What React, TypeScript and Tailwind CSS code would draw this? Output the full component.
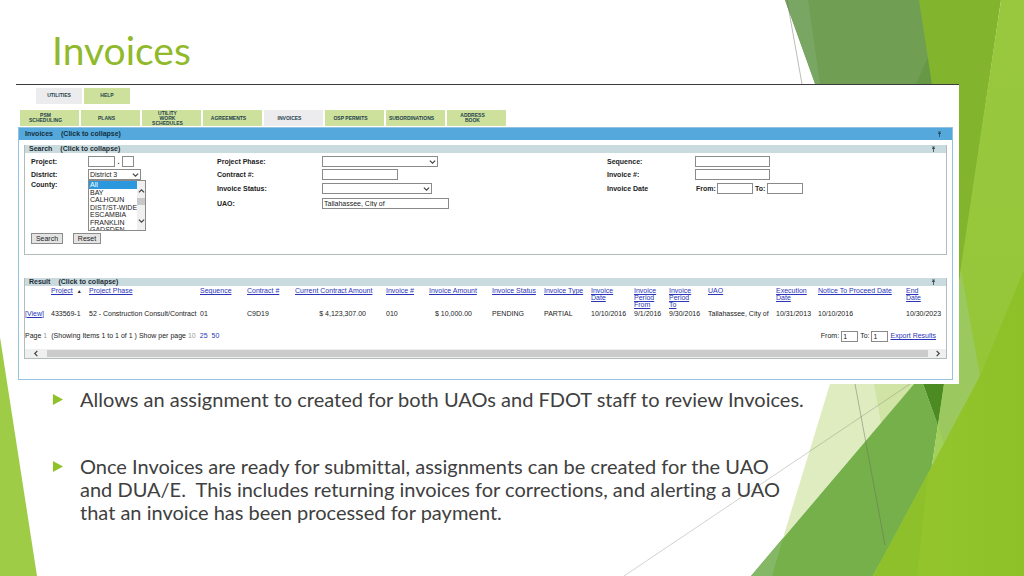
import type { ReactNode } from "react";
import { clsx } from "clsx";

const COUNTIES = ["All", "BAY", "CALHOUN", "DIST/ST-WIDE", "ESCAMBIA", "FRANKLIN", "GADSDEN"];

const TABS = [
  "PSM\nSCHEDULING",
  "PLANS",
  "UTILITY\nWORK\nSCHEDULES",
  "AGREEMENTS",
  "INVOICES",
  "OSP PERMITS",
  "SUBORDINATIONS",
  "ADDRESS\nBOOK",
];

const COLUMNS = [
  { label: "Project", value: "433569-1", width: "w-[38px]", sorted: true },
  { label: "Project Phase", value: "52 - Construction Consult/Contract", width: "w-[111px]" },
  { label: "Sequence", value: "01", width: "w-[47px]" },
  { label: "Contract #", value: "C9D19", width: "w-[48px]" },
  { label: "Current Contract Amount", value: "$ 4,123,307.00", width: "w-[91px]", money: true },
  { label: "Invoice #", value: "010", width: "w-[43px]" },
  { label: "Invoice Amount", value: "$ 10,000.00", width: "w-[63px]", money: true },
  { label: "Invoice Status", value: "PENDING", width: "w-[52px]" },
  { label: "Invoice Type", value: "PARTIAL", width: "w-[47px]" },
  { label: "Invoice\nDate", value: "10/10/2016", width: "w-[43px]" },
  { label: "Invoice\nPeriod\nFrom", value: "9/1/2016", width: "w-[35px]" },
  { label: "Invoice\nPeriod\nTo", value: "9/30/2016", width: "w-[39px]" },
  { label: "UAO", value: "Tallahassee, City of", width: "w-[68px]" },
  { label: "Execution\nDate", value: "10/31/2013", width: "w-[42px]" },
  { label: "Notice To Proceed Date", value: "10/10/2016", width: "w-[88px]" },
  { label: "End\nDate", value: "10/30/2023", width: "w-auto" },
];

const BULLETS = [
  "Allows an assignment to created for both UAOs and FDOT staff to review Invoices.",
  "Once Invoices are ready for submittal, assignments can be created for the UAO\nand DUA/E.\u00a0 This includes returning invoices for corrections, and alerting a UAO\nthat an invoice has been processed for payment.",
];

/** Faceted green shapes behind the slide content. */
function Facets() {
  return (
    <svg
      className="absolute inset-0 h-full w-full"
      viewBox="0 0 1024 576"
      preserveAspectRatio="none"
      aria-hidden="true"
    >
      <defs>
        <linearGradient id="bright" x1="0" y1="0" x2="1" y2="0">
          <stop offset="0" stopColor="#98c62f" />
          <stop offset="1" stopColor="#8cc127" />
        </linearGradient>
        <linearGradient id="right" x1="0" y1="0" x2="0" y2="1">
          <stop offset="0" stopColor="#99c83f" />
          <stop offset="1" stopColor="#93c534" />
        </linearGradient>
      </defs>
      <polygon points="0,337 37,576 0,576" fill="#9fcc46" />
      {/* pale wedge */}
      <polygon points="830,384 783,538 914,384" fill="#deecc0" />
      <polygon points="874,384 881,423 914,384" fill="#d0e4a6" />
      {/* top band */}
      <polygon points="785,0 920,0 962,276 938,424" fill="#709e52" />
      <polygon points="785,0 808,0 820,84 815,84" fill="#7aa663" />
      <polygon points="929,55 916,84 933,84" fill="#669845" />
      <polygon points="919,0 1001,0 960,280 945,170" fill="#82b42d" />
      <polygon points="923,384 944,384 938,426" fill="#4b8b22" />
      {/* lower band */}
      <polygon points="914,384 751,576 873,576 931,472 938,425 923,384" fill="#76b04b" />
      <polygon points="783,538 751,576 772,576" fill="#84b866" />
      {/* right side */}
      <polygon points="1001,0 1024,0 1024,576 925,576 932,470 944,384 959,280" fill="url(#right)" />
      <polygon points="961,270 980,376 944,444 938,424" fill="#9bc95f" />
      <polygon points="938,424 944,444 931,472" fill="#a2d05c" />
      <polygon points="1024,270 980,376 873,576 1024,576" fill="url(#bright)" />
      <polygon points="928,474 873,576 917,576" fill="#8ec02c" />
      <g stroke="#6b6b5b" strokeOpacity="0.45" fill="none">
        <path d="M787 0L802 84" />
        <path d="M855 384L885 545" />
        <path d="M910 384L624 576" strokeOpacity="0.3" />
      </g>
    </svg>
  );
}

function Chevron({ dir, className }: { dir: "up" | "down" | "left" | "right"; className?: string }) {
  const d = {
    up: "M1 5L4 2L7 5",
    down: "M1 3L4 6L7 3",
    left: "M5 1L2 4L5 7",
    right: "M3 1L6 4L3 7",
  }[dir];
  return (
    <svg viewBox="0 0 8 8" className={clsx("size-[7px] shrink-0", className)} aria-hidden="true">
      <path d={d} fill="none" stroke="#444" strokeWidth="1.4" />
    </svg>
  );
}

function PinMark() {
  return (
    <svg viewBox="0 0 5 6" className="h-[6px] w-[5px]" aria-hidden="true">
      <path d="M1 1h3M1 2.5h3M2.5 1v5" stroke="#26424f" strokeWidth="0.8" fill="none" />
    </svg>
  );
}

function SectionBar({ title }: { title: string }) {
  return (
    <button
      type="button"
      className="flex h-2 w-full items-center bg-[#c9dbdf] pr-2.5 pl-1 text-[7px] leading-[8px] font-bold text-[#1c2b33]"
    >
      <span>{title}</span>
      <span className="ml-2">(Click to collapse)</span>
      <span className="ml-auto">
        <PinMark />
      </span>
    </button>
  );
}

function TextBox({ id, label, className, value }: { id?: string; label?: string; className: string; value?: string }) {
  return (
    <input
      id={id}
      aria-label={label}
      defaultValue={value}
      className={clsx("h-[11px] border border-[#8a8a8a] bg-white px-px text-[7px] leading-[8px] text-[#222]", className)}
    />
  );
}

function DropDown({ id, className, value }: { id: string; className: string; value?: string }) {
  return (
    <span className={clsx("relative block", className)}>
      <select
        id={id}
        className="block h-[11px] w-full appearance-none border border-[#8a8a8a] bg-white px-px text-[7px] leading-[8px] text-[#222]"
      >
        <option>{value}</option>
      </select>
      <Chevron dir="down" className="pointer-events-none absolute top-0.5 right-0.5" />
    </span>
  );
}

function Field({ id, label, labelWidth, children }: { id: string; label: string; labelWidth: string; children: ReactNode }) {
  return (
    <div className="flex items-center">
      <label htmlFor={id} className={clsx("shrink-0 font-bold", labelWidth)}>
        {label}
      </label>
      {children}
    </div>
  );
}

function SearchForm() {
  return (
    <section className="h-[110px] border border-t-0 border-[#b5babb]">
      <SectionBar title="Search" />
      <form className="flex px-1.5 pt-[3px] text-[7px] leading-[8px] text-[#222]">
        <div className="w-[186px] shrink-0">
          <div className="flex flex-col gap-0.5">
            <Field id="project" label="Project:" labelWidth="w-[57px]">
              <TextBox id="project" className="w-[27px]" />
              <span className="w-[7px] text-center font-bold">.</span>
              <TextBox label="Project suffix" className="w-[12px]" />
            </Field>
            <Field id="district" label="District:" labelWidth="w-[57px]">
              <DropDown id="district" className="w-[53px]" value="District 3" />
            </Field>
          </div>
          <div className="flex">
            <label htmlFor="county" className="w-[57px] shrink-0 pt-px font-bold">
              County:
            </label>
            <div className="flex h-[51px] w-[58px] border border-[#8a8a8a]">
              <select
                id="county"
                size={6}
                multiple
                defaultValue={["All"]}
                className="h-full w-[48px] appearance-none overflow-hidden text-[7px] leading-[8px]"
              >
                {COUNTIES.map((c, i) => (
                  <option
                    key={c}
                    className={clsx(
                      "min-h-0 p-0 pl-px checked:bg-[linear-gradient(#2b97dd,#2b97dd)] checked:text-white",
                      i % 2 ? "h-[7px]" : "h-[8px]",
                    )}
                  >
                    {c}
                  </option>
                ))}
              </select>
              <div className="flex w-2 flex-col items-center bg-[#f0f0f0] pt-[7px] pb-1.5">
                <Chevron dir="up" />
                <span className="mt-[3px] h-[7px] w-full bg-[#c8c8c8]" />
                <Chevron dir="down" className="mt-auto" />
              </div>
            </div>
          </div>
          <div className="mt-0.5 flex gap-2.5">
            <button type="submit" className="h-[11px] w-8 border border-[#8c8c8c] bg-[#e4e4e4]">
              Search
            </button>
            <button type="reset" className="h-[11px] w-7 border border-[#8c8c8c] bg-[#e4e4e4]">
              Reset
            </button>
          </div>
        </div>
        <div className="flex w-[390px] shrink-0 flex-col gap-0.5">
          <Field id="phase" label="Project Phase:" labelWidth="w-[105px]">
            <DropDown id="phase" className="w-[116px]" />
          </Field>
          <Field id="contract" label="Contract #:" labelWidth="w-[105px]">
            <TextBox id="contract" className="w-[76px]" />
          </Field>
          <div className="mt-px">
            <Field id="status" label="Invoice Status:" labelWidth="w-[105px]">
              <DropDown id="status" className="w-[110px]" />
            </Field>
          </div>
          <div className="mt-0.5">
            <Field id="uao" label="UAO:" labelWidth="w-[105px]">
              <TextBox id="uao" className="w-[127px]" value="Tallahassee, City of" />
            </Field>
          </div>
        </div>
        <div className="flex flex-col gap-0.5">
          <Field id="sequence" label="Sequence:" labelWidth="w-[88px]">
            <TextBox id="sequence" className="w-[75px]" />
          </Field>
          <Field id="invoice-no" label="Invoice #:" labelWidth="w-[88px]">
            <TextBox id="invoice-no" className="w-[75px]" />
          </Field>
          <div className="mt-px flex items-center font-bold">
            <span className="w-[89px]">Invoice Date</span>
            <label htmlFor="date-from" className="w-[21px]">From:</label>
            <TextBox id="date-from" className="w-9" />
            <label htmlFor="date-to" className="ml-0.5 w-3">To:</label>
            <TextBox id="date-to" className="w-9" />
          </div>
        </div>
      </form>
    </section>
  );
}

function Results() {
  return (
    <section className="mt-[23px] border-r border-b border-l border-[#b5babb] text-[7px] text-[#222]">
      <SectionBar title="Result" />
      <table className="mt-px w-full table-fixed border-collapse text-left leading-[7px]">
        <thead>
          <tr className="align-top">
            <th className="w-[26px] p-0" />
            {COLUMNS.map((c) => (
              <th
                key={c.label}
                className={clsx("p-0 font-normal whitespace-pre", c.width, c.money && "pr-[18px] text-right")}
              >
                <a href="#" className="text-[#2b35b8] underline">
                  {c.label}
                </a>
                {c.sorted && <span className="ml-1 text-[5px]">▲</span>}
              </th>
            ))}
          </tr>
        </thead>
        <tbody>
          <tr className="h-2.5">
            <td className="p-0">
              <a href="#" className="text-[#2b35b8] underline">[View]</a>
            </td>
            {COLUMNS.map((c) => (
              <td key={c.label} className={clsx("p-0 whitespace-nowrap", c.money && "pr-[20px] text-right")}>
                {c.value}
              </td>
            ))}
          </tr>
        </tbody>
      </table>
      <div className="mt-3 flex h-3 items-center pr-2.5 leading-[8px]">
        <span>Page</span>
        <span className="ml-0.5 text-[#999]">1</span>
        <span className="ml-1">(Showing Items 1 to 1 of 1 )</span>
        <span className="ml-0.5">Show per page</span>
        <span className="ml-0.5 text-[#999]">10</span>
        <a href="#" className="ml-1 text-[#2b35b8]">25</a>
        <a href="#" className="ml-1 text-[#2b35b8]">50</a>
        <label htmlFor="page-from" className="mr-0.5 ml-auto">From:</label>
        <TextBox id="page-from" className="w-[17px]" value="1" />
        <label htmlFor="page-to" className="mx-0.5">To:</label>
        <TextBox id="page-to" className="w-[17px]" value="1" />
        <a href="#" className="ml-0.5 text-[#2b35b8] underline">Export Results</a>
      </div>
      <div className="mt-[7px] flex h-[9px] items-center bg-[#efefef]">
        <span className="flex w-[22px] justify-center">
          <Chevron dir="left" />
        </span>
        <span className="h-[7px] flex-1 bg-[#cbcbcb]" />
        <span className="flex w-[18px] justify-center">
          <Chevron dir="right" />
        </span>
      </div>
    </section>
  );
}

function InvoiceApp() {
  return (
    <div className="border-t border-[#3f3a3f] bg-white pr-1.5 pb-1 pl-0.5 font-['Liberation_Sans',Arial,sans-serif]">
      <nav className="flex gap-0.5 pt-[3px] pl-[18px] text-[5px] font-bold text-[#24424c]">
        <button type="button" className="h-4 w-[46px] bg-[#ececee]">UTILITIES</button>
        <button type="button" className="h-4 w-[46px] bg-[#cde19c]">HELP</button>
      </nav>
      <nav className="mt-1.5 flex gap-0.5 pl-0.5 text-[5px] leading-[5px] font-bold text-[#24424c]">
        {TABS.map((tab) => (
          <button
            key={tab}
            type="button"
            className={clsx(
              "flex h-4 w-[59px] items-center justify-center pr-3 pl-1 whitespace-pre",
              tab === "INVOICES" ? "bg-[#ececee]" : "bg-[#cde19c]",
            )}
          >
            {tab}
          </button>
        ))}
      </nav>
      <main className="mt-px border border-[#93c3e0]">
        <button
          type="button"
          className="flex h-3 w-full items-center bg-[#54a8db] pr-2.5 pl-1.5 text-[7px] font-bold text-[#14303f]"
        >
          <span>Invoices</span>
          <span className="ml-2">(Click to collapse)</span>
          <span className="ml-auto">
            <PinMark />
          </span>
        </button>
        <div className="px-[5px] pt-[5px] pb-5">
          <SearchForm />
          <Results />
        </div>
      </main>
    </div>
  );
}

export default function App() {
  return (
    <div className="relative min-h-screen overflow-hidden bg-white">
      <Facets />
      <div className="relative pr-[65px] pl-4 font-['Trebuchet_MS',Lato,sans-serif]">
        <h1 className="pt-[26px] pb-2.5 pl-9 text-[39px] leading-[48px] text-[#90b92c]">Invoices</h1>
        <InvoiceApp />
        <ul className="flex flex-col gap-11 pt-1 pl-9 text-[20px] leading-[23px] text-[#404040] [font-variant-ligatures:none]">
          {BULLETS.map((text) => (
            <li key={text} className="flex">
              <svg viewBox="0 0 12 12" className="mt-1.5 mr-[17px] size-[11px] shrink-0" aria-hidden="true">
                <path d="M1 0L12 6L1 12Z" fill="#8fc229" />
              </svg>
              <p className="whitespace-pre-line">{text}</p>
            </li>
          ))}
        </ul>
      </div>
    </div>
  );
}
